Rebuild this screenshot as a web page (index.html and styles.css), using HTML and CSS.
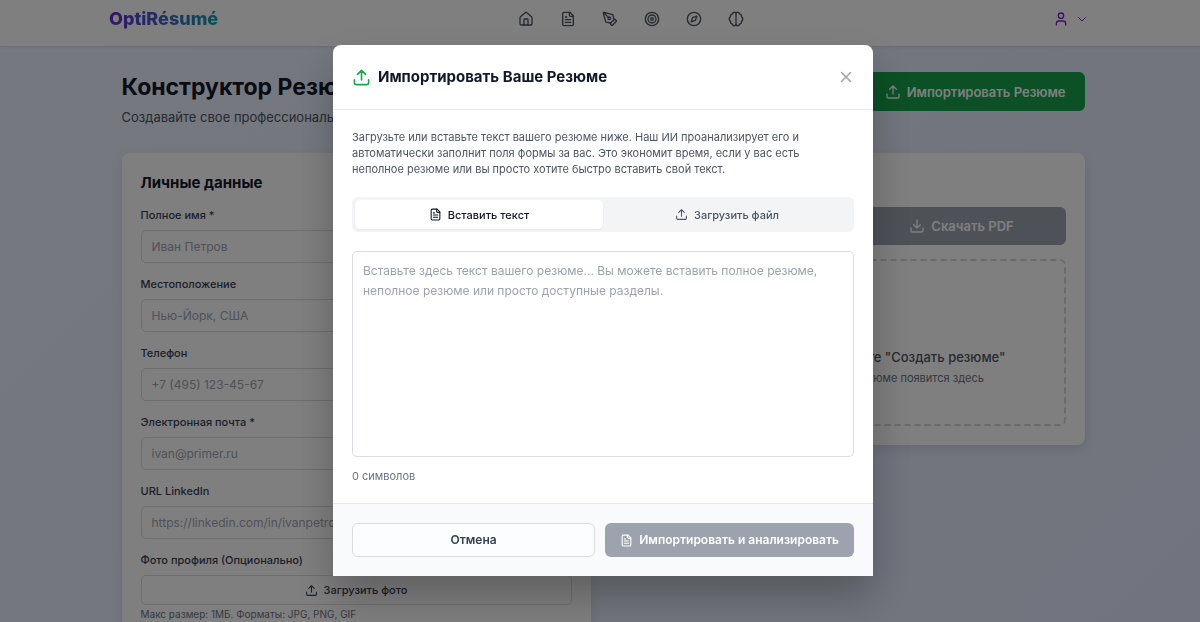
FILE: index.html
```html
<!DOCTYPE html>
<html lang="ru">
<head>
	<meta charset="UTF-8">
	<meta name="viewport" content="width=device-width, initial-scale=1">
	<title>OptiRésumé</title>
	<link rel="stylesheet" href="styles.css">
</head>
<body>
	<svg class="sprite" aria-hidden="true">
		<symbol id="i-home" viewBox="0 0 24 24"><path d="M15 21v-8a1 1 0 0 0-1-1h-4a1 1 0 0 0-1 1v8"/><path d="M3 10a2 2 0 0 1 .7-1.5l7-6a2 2 0 0 1 2.6 0l7 6A2 2 0 0 1 21 10v9a2 2 0 0 1-2 2H5a2 2 0 0 1-2-2z"/></symbol>
		<symbol id="i-file" viewBox="0 0 24 24"><path d="M15 2H6a2 2 0 0 0-2 2v16a2 2 0 0 0 2 2h12a2 2 0 0 0 2-2V7z"/><path d="M14 2v4a2 2 0 0 0 2 2h4M10 9H8M16 13H8M16 17H8"/></symbol>
		<symbol id="i-pen" viewBox="0 0 24 24"><path d="M15.7 21.3a1 1 0 0 1-1.4 0l-1.6-1.6a1 1 0 0 1 0-1.4l5.6-5.6a1 1 0 0 1 1.4 0l1.6 1.6a1 1 0 0 1 0 1.4z"/><path d="m18 13-1.4-6.9a1 1 0 0 0-.7-.7L3.2 2a1 1 0 0 0-1.2 1.2l3.5 12.7a1 1 0 0 0 .7.7L13 18M2.3 2.3l7.3 7.3"/><circle cx="11" cy="11" r="2"/></symbol>
		<symbol id="i-target" viewBox="0 0 24 24"><circle cx="12" cy="12" r="10"/><circle cx="12" cy="12" r="6"/><circle cx="12" cy="12" r="2"/></symbol>
		<symbol id="i-compass" viewBox="0 0 24 24"><circle cx="12" cy="12" r="10"/><path d="m16.2 7.8-2.1 6.3-6.3 2.1 2.1-6.3z"/></symbol>
		<symbol id="i-brain" viewBox="0 0 24 24"><path d="M12 4.5a2.5 2.5 0 0 0-5-.3A3.5 3.5 0 0 0 3.8 8.5a4 4 0 0 0 0 7A3.5 3.5 0 0 0 7 19.8a2.5 2.5 0 0 0 5-.3zM12 4.5a2.5 2.5 0 0 1 5-.3 3.5 3.5 0 0 1 3.2 4.3 4 4 0 0 1 0 7 3.5 3.5 0 0 1-3.2 4.3 2.5 2.5 0 0 1-5-.3z"/></symbol>
		<symbol id="i-user" viewBox="0 0 24 24"><path d="M19 21v-2a4 4 0 0 0-4-4H9a4 4 0 0 0-4 4v2"/><circle cx="12" cy="7" r="4"/></symbol>
		<symbol id="i-down" viewBox="0 0 24 24"><path d="m5 9 7 7 7-7"/></symbol>
		<symbol id="i-upload" viewBox="0 0 24 24"><path d="M21 15v4a2 2 0 0 1-2 2H5a2 2 0 0 1-2-2v-4M17 8l-5-5-5 5M12 3v12"/></symbol>
		<symbol id="i-download" viewBox="0 0 24 24"><path d="M21 15v4a2 2 0 0 1-2 2H5a2 2 0 0 1-2-2v-4M7 10l5 5 5-5M12 15V3"/></symbol>
		<symbol id="i-close" viewBox="0 0 24 24"><path d="M18 6 6 18M6 6l12 12"/></symbol>
	</svg>

	<header class="topbar">
		<div class="topbar-inner">
			<a class="logo" href="#">OptiRésumé</a>
			<nav class="nav">
				<a href="#" aria-label="Главная"><svg class="icon"><use href="#i-home"/></svg></a>
				<a href="#" aria-label="Резюме"><svg class="icon"><use href="#i-file"/></svg></a>
				<a href="#" aria-label="Письмо"><svg class="icon"><use href="#i-pen"/></svg></a>
				<a href="#" aria-label="Цели"><svg class="icon"><use href="#i-target"/></svg></a>
				<a href="#" aria-label="Карьера"><svg class="icon"><use href="#i-compass"/></svg></a>
				<a href="#" aria-label="Интервью"><svg class="icon"><use href="#i-brain"/></svg></a>
			</nav>
			<button class="account" type="button" aria-label="Аккаунт">
				<svg class="icon"><use href="#i-user"/></svg>
				<svg class="icon icon-xs"><use href="#i-down"/></svg>
			</button>
		</div>
	</header>

	<main class="page">
		<div class="page-head">
			<div>
				<h1>Конструктор Резюме</h1>
				<p>Создавайте свое профессиональное резюме</p>
			</div>
			<button class="btn btn-green" type="button"><svg class="icon"><use href="#i-upload"/></svg>Импортировать Резюме</button>
		</div>

		<div class="columns">
			<form class="card">
				<h2>Личные данные</h2>
				<div class="field">
					<label for="name">Полное имя *</label>
					<input id="name" type="text" placeholder="Иван Петров">
				</div>
				<div class="field">
					<label for="place">Местоположение</label>
					<input id="place" type="text" placeholder="Нью-Йорк, США">
				</div>
				<div class="field">
					<label for="phone">Телефон</label>
					<input id="phone" type="tel" placeholder="+7 (495) 123-45-67">
				</div>
				<div class="field">
					<label for="email">Электронная почта *</label>
					<input id="email" type="email" placeholder="ivan@primer.ru">
				</div>
				<div class="field">
					<label for="linkedin">URL LinkedIn</label>
					<input id="linkedin" type="url" placeholder="https://linkedin.com/in/ivanpetrov">
				</div>
				<div class="field">
					<label for="photo">Фото профиля (Опционально)</label>
					<button id="photo" class="btn-photo" type="button"><svg class="icon icon-s"><use href="#i-upload"/></svg>Загрузить фото</button>
					<p class="hint">Макс размер: 1МБ. Форматы: JPG, PNG, GIF</p>
				</div>
			</form>

			<section class="card preview">
				<div class="actions">
					<button class="btn btn-gray" type="button" disabled><svg class="icon"><use href="#i-download"/></svg>Скачать PDF</button>
				</div>
				<div class="empty">
					<p class="empty-title">Заполните форму и нажмите "Создать резюме"</p>
					<p class="empty-text">Ваше оптимизированное резюме появится здесь</p>
				</div>
			</section>
		</div>
	</main>

	<div class="overlay">
		<div class="modal" role="dialog" aria-modal="true" aria-labelledby="modal-title">
			<div class="modal-head">
				<h2 id="modal-title"><svg class="icon icon-m"><use href="#i-upload"/></svg>Импортировать Ваше Резюме</h2>
				<button class="close" type="button" aria-label="Закрыть"><svg class="icon"><use href="#i-close"/></svg></button>
			</div>
			<div class="modal-body">
				<p class="intro">Загрузьте или вставьте текст вашего резюме ниже. Наш ИИ проанализирует его и автоматически заполнит поля формы за вас. Это экономит время, если у вас есть неполное резюме или вы просто хотите быстро вставить свой текст.</p>
				<div class="tabs" role="tablist">
					<button class="tab active" type="button" role="tab" aria-selected="true"><svg class="icon icon-s"><use href="#i-file"/></svg>Вставить текст</button>
					<button class="tab" type="button" role="tab" aria-selected="false"><svg class="icon icon-s"><use href="#i-upload"/></svg>Загрузить файл</button>
				</div>
				<textarea aria-label="Текст резюме" placeholder="Вставьте здесь текст вашего резюме... Вы можете вставить полное резюме, неполное резюме или просто доступные разделы."></textarea>
				<p class="count">0 символов</p>
			</div>
			<div class="modal-foot">
				<button class="btn btn-line" type="button">Отмена</button>
				<button class="btn btn-gray" type="button" disabled><svg class="icon icon-s"><use href="#i-file"/></svg>Импортировать и анализировать</button>
			</div>
		</div>
	</div>
</body>
</html>
```
FILE: styles.css
```css
*{
	margin: 0;
	padding: 0;
	box-sizing: border-box;
}
html,body{
	height: 100%;
	overflow: hidden;
}
body{
	font-family: Inter, "Noto Sans", sans-serif;
	font-size: 13px;
	line-height: 20px;
	color: #111827;
	background: linear-gradient(135deg, #ebf2fe, #e3e7fc);
}
button,input,textarea{
	font: inherit;
	color: inherit;
}
button{
	display: flex;
	align-items: center;
	justify-content: center;
	border: 0;
	background: none;
	cursor: pointer;
}
a{
	color: inherit;
	text-decoration: none;
}
.sprite{
	display: none;
}
.icon{
	width: 16px;
	height: 16px;
	flex: none;
	display: block;
	fill: none;
	stroke: currentColor;
	stroke-width: 2;
	stroke-linecap: round;
	stroke-linejoin: round;
}
.icon-xs{
	width: 12px;
	height: 12px;
}
.icon-s{
	width: 13px;
	height: 13px;
}
.icon-m{
	width: 19px;
	height: 19px;
}

/* top bar */
.topbar{
	padding-left: 6px;
	background: #fff;
	box-shadow: 0 1px 3px rgba(0,0,0,.1);
}
.topbar-inner{
	max-width: 988px;
	height: 46px;
	padding-bottom: 8px;
	margin: 0 auto;
	display: flex;
	align-items: center;
	justify-content: space-between;
}
.logo{
	font-size: 18px;
	font-weight: 800;
	background: linear-gradient(90deg, #6d28d9, #0d9fae);
	-webkit-background-clip: text;
	background-clip: text;
	color: transparent;
}
.nav{
	display: flex;
	gap: 26px;
	color: #4b5563;
}
.account{
	gap: 7px;
	padding: 0 9px;
	color: #7e22ce;
}

/* page */
.page{
	padding: 26px 0 0 6px;
}
.page-head,.columns{
	max-width: 963px;
	margin: 0 auto;
}
.page-head{
	display: flex;
	align-items: flex-start;
	justify-content: space-between;
	padding-bottom: 26px;
}
.page-head h1{
	font-size: 23px;
	line-height: 30px;
	font-weight: 700;
}
.page-head p{
	margin-top: 5px;
	color: #4b5563;
}
.page-head .btn{
	height: 39px;
	padding: 0 19px;
}
.btn{
	height: 38px;
	gap: 6px;
	border-radius: 6px;
	font-weight: 600;
}
.btn-green{
	background: #16a34a;
	color: #fff;
}
.btn-gray{
	background: #9ca3af;
	color: #fff;
}
.btn-line{
	background: #fcfdfe;
	border: 1px solid #d9dce1;
	color: #374151;
}
.columns{
	display: grid;
	grid-template-columns: 1fr 1fr;
	align-items: start;
	gap: 25px;
}
.card{
	padding: 19px;
	background: #fff;
	border-radius: 8px;
	box-shadow: 0 4px 12px rgba(0,0,0,.1);
}
.card h2{
	font-size: 15px;
	line-height: 22px;
	font-weight: 700;
	margin-bottom: 13px;
}
.field{
	margin-bottom: 13px;
}
.field label{
	display: block;
	margin-bottom: 7px;
	font-size: 11px;
	line-height: 16px;
	font-weight: 500;
	color: #374151;
}
.field input{
	display: block;
	width: 100%;
	height: 33px;
	padding: 0 10px;
	border: 1px solid #d9dce1;
	border-radius: 5px;
	background: #fff;
}
.field input,.modal-body textarea{
	font-size: 12px;
	line-height: 20px;
}
::placeholder{
	color: #9ca3af;
	opacity: 1;
}
.btn-photo{
	width: 100%;
	height: 30px;
	gap: 6px;
	border: 1px solid #d9dce1;
	border-radius: 5px;
	font-size: 11px;
	font-weight: 500;
	color: #374151;
}
.hint{
	margin-top: 3px;
	font-size: 10px;
	line-height: 13px;
	color: #6b7280;
}
.preview{
	padding-top: 54px;
}
.actions{
	display: flex;
	justify-content: flex-end;
}
.actions .btn{
	width: 208px;
}
.empty{
	margin-top: 14px;
	height: 167px;
	padding-bottom: 36px;
	display: flex;
	flex-direction: column;
	align-items: center;
	justify-content: flex-end;
	gap: 1px;
	border: 2px dashed #d1d5db;
	border-radius: 6px;
}
.empty-title{
	font-weight: 500;
	color: #4b5563;
}
.empty-text{
	font-size: 11px;
	color: #6b7280;
}

/* import dialog */
.overlay{
	position: fixed;
	inset: 0;
	padding: 0 0 1px 6px;
	display: flex;
	align-items: center;
	justify-content: center;
	background: rgba(0,0,0,.5);
}
.modal{
	width: 100%;
	max-width: 540px;
	background: #fff;
	border-radius: 8px 8px 0 0;
	box-shadow: 0 20px 40px rgba(0,0,0,.25);
}
.modal-head{
	display: flex;
	align-items: center;
	justify-content: space-between;
	height: 65px;
	padding: 0 18px 0 19px;
	border-bottom: 1px solid #e5e7eb;
}
.modal-head h2{
	display: flex;
	align-items: center;
	gap: 7px;
	font-size: 15px;
	font-weight: 700;
}
.modal-head h2 .icon{
	color: #16a34a;
}
.close{
	color: #9ca3af;
}
.close .icon{
	width: 18px;
	height: 18px;
}
.modal-body{
	padding: 19px;
}
.intro{
	font-size: 11px;
	line-height: 16px;
	color: #4b5563;
}
.tabs{
	display: grid;
	grid-template-columns: 1fr 1fr;
	margin: 20px 0 19px;
	padding: 3px;
	background: #f3f4f6;
	border-radius: 6px;
}
.tab{
	height: 29px;
	gap: 6px;
	border-radius: 5px;
	font-size: 11px;
	font-weight: 500;
	color: #4b5563;
}
.tab.active{
	background: #fff;
	color: #111827;
	box-shadow: 0 1px 2px rgba(0,0,0,.06);
}
.modal-body textarea{
	display: block;
	width: 100%;
	height: 206px;
	padding: 9px 10px;
	border: 1px solid #d9dce1;
	border-radius: 5px;
	resize: none;
}
.count{
	margin-top: 11px;
	font-size: 11px;
	line-height: 16px;
	color: #6b7280;
}
.modal-foot{
	display: flex;
	gap: 10px;
	padding: 19px;
	background: #f9fafb;
	border-top: 1px solid #e5e7eb;
}
.modal-foot .btn{
	height: 34px;
	padding: 0 15px;
	font-size: 12px;
}
.modal-foot .btn-line{
	flex: 1;
}
```
